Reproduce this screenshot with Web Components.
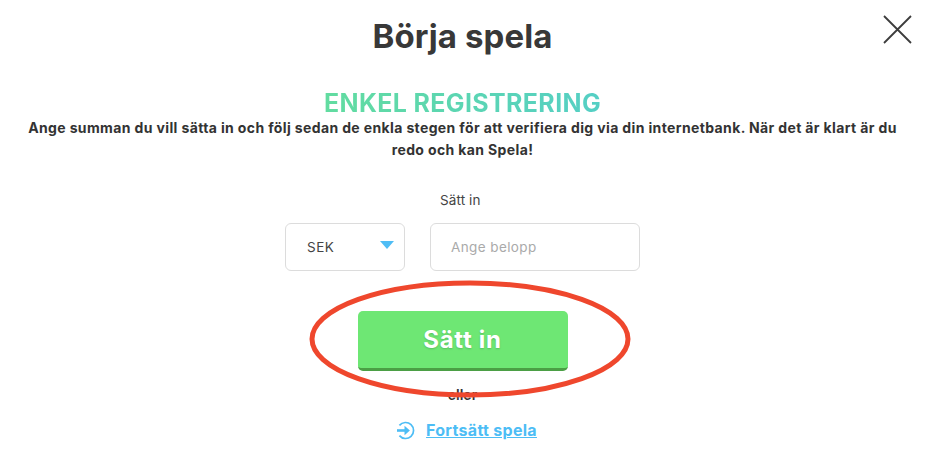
<!DOCTYPE html>
<html lang="sv">
<head>
<meta charset="utf-8">
<title>Börja spela</title>
<style>
  html, body { margin: 0; padding: 0; background: #fff; }
</style>
</head>
<body>
<play-dialog>
  <span slot="title">Börja spela</span>
  <span slot="heading">ENKEL REGISTRERING</span>
  <span slot="intro">Ange summan du vill sätta in och följ sedan de enkla stegen för att verifiera dig via din internetbank. När det är klart är du redo och kan Spela!</span>
  <deposit-form label="Sätt in" currency="SEK" placeholder="Ange belopp"></deposit-form>
  <cta-button>Sätt in</cta-button>
  <span slot="or">eller</span>
  <continue-link slot="link">Fortsätt spela</continue-link>
</play-dialog>

<script>
class PlayDialog extends HTMLElement {
  constructor (...props) {
    super(...props)
    const root = this.attachShadow({mode: 'open'})
    root.innerHTML = `
      <style>
        :host {
          display: block;
          position: relative;
          width: 925px;
          height: 455px;
          overflow: hidden;
          box-sizing: border-box;
          padding-top: 16px;
          font-family: Inter, 'Noto Sans', sans-serif;
          color: #3a3a3a;
        }
        .body {
          display: flex;
          flex-direction: column;
          align-items: center;
        }
        h1 {
          margin: 0;
          font-size: 33px;
          line-height: 40px;
          font-weight: 700;
          letter-spacing: .1px;
          color: #383838;
        }
        h2 {
          margin: 32px 0 0;
          font-size: 25px;
          line-height: 30px;
          font-weight: 700;
          letter-spacing: .35px;
          background: linear-gradient(90deg, #62dca0, #55cfc5);
          -webkit-background-clip: text;
          background-clip: text;
          color: transparent;
        }
        p {
          margin: -1px 0 0;
          width: 880px;
          text-align: center;
          font-size: 14px;
          line-height: 22px;
          font-weight: 700;
          letter-spacing: .37px;
          color: #333;
        }
        .or {
          margin-top: 15px;
          font-size: 14px;
          line-height: 18px;
          font-weight: 600;
          color: #333;
        }
        .close {
          position: absolute;
          left: 883px;
          top: 15px;
          width: 29px;
          height: 29px;
        }
        .mark {
          position: absolute;
          left: 305px;
          top: 276px;
          width: 330px;
          height: 126px;
          pointer-events: none;
        }
      </style>
      <div class="body">
        <h1><slot name="title"></slot></h1>
        <h2><slot name="heading"></slot></h2>
        <p><slot name="intro"></slot></p>
        <slot></slot>
        <div class="or"><slot name="or"></slot></div>
        <slot name="link"></slot>
      </div>
      <svg class="close" viewBox="0 0 29 29" fill="none" stroke="#3c3c3c" stroke-width="1.8">
        <path d="M1 1l27 27M28 1L1 28"/>
      </svg>
      <svg class="mark" viewBox="0 0 330 126" fill="none" stroke="#ef472d" stroke-width="5">
        <ellipse cx="165" cy="63" rx="158" ry="56"/>
      </svg>
    `
  }
}

class DepositForm extends HTMLElement {
  constructor (...props) {
    super(...props)
    const root = this.attachShadow({mode: 'open'})
    root.innerHTML = `
      <style>
        :host {
          display: flex;
          flex-direction: column;
          align-items: center;
          margin-top: 30px;
          font-size: 13.5px;
          color: #444;
        }
        .label {
          width: 355px;
          box-sizing: border-box;
          padding-left: 155px;
          line-height: 18px;
          letter-spacing: .1px;
        }
        .row {
          display: flex;
          gap: 25px;
          margin-top: 14px;
        }
        .box {
          box-sizing: border-box;
          height: 48px;
          border: 1px solid #dcdcdc;
          border-radius: 6px;
          display: flex;
          align-items: center;
        }
        .select {
          width: 120px;
          padding: 0 10px 0 21px;
          justify-content: space-between;
          letter-spacing: .5px;
        }
        .select svg { width: 14px; height: 8px; margin: 0 0 5px; }
        .input {
          width: 210px;
          padding-left: 20px;
          color: #aaa;
          letter-spacing: .4px;
        }
      </style>
      <div class="label">${this.getAttribute('label') || ''}</div>
      <div class="row">
        <div class="box select">
          <span>${this.getAttribute('currency') || ''}</span>
          <svg viewBox="0 0 14 8"><path d="M0 0h14L7 8z" fill="#4fbdf5"/></svg>
        </div>
        <div class="box input">${this.getAttribute('placeholder') || ''}</div>
      </div>
    `
  }
}

class CtaButton extends HTMLElement {
  constructor (...props) {
    super(...props)
    const root = this.attachShadow({mode: 'open'})
    root.innerHTML = `
      <style>
        :host {
          display: flex;
          align-items: center;
          justify-content: center;
          box-sizing: border-box;
          width: 210px;
          height: 60px;
          margin-top: 40px;
          background: #6ee774;
          border-bottom: 3px solid #4b9f45;
          border-radius: 5px;
          color: #fff;
          font-size: 24px;
          font-weight: 700;
          letter-spacing: .7px;
          text-shadow: 0 1px 2px rgba(0, 0, 0, .18);
        }
      </style>
      <slot></slot>
    `
  }
}

class ContinueLink extends HTMLElement {
  constructor (...props) {
    super(...props)
    const root = this.attachShadow({mode: 'open'})
    root.innerHTML = `
      <style>
        :host {
          display: flex;
          align-items: center;
          gap: 11px;
          margin: 15px 0 0 8px;
          color: #4dbdf5;
          font-size: 16px;
          line-height: 20px;
          font-weight: 700;
          letter-spacing: .3px;
        }
        svg { width: 19px; height: 19px; margin-top: 2px; }
        a { color: inherit; text-decoration: underline; }
      </style>
      <svg viewBox="0 0 19 19" fill="none" stroke="#4dbdf5" stroke-width="1.7">
        <path d="M3.4 4.4a8 8 0 1 1 0 10.2"/>
        <path d="M1 9.5h8" stroke-width="2.6"/>
        <path d="M8.5 4.8l5.4 4.7-5.4 4.7z" fill="#4dbdf5" stroke="none"/>
      </svg>
      <a href="#"><slot></slot></a>
    `
  }
}

window.customElements.define('play-dialog', PlayDialog)
window.customElements.define('deposit-form', DepositForm)
window.customElements.define('cta-button', CtaButton)
window.customElements.define('continue-link', ContinueLink)
</script>
</body>
</html>
